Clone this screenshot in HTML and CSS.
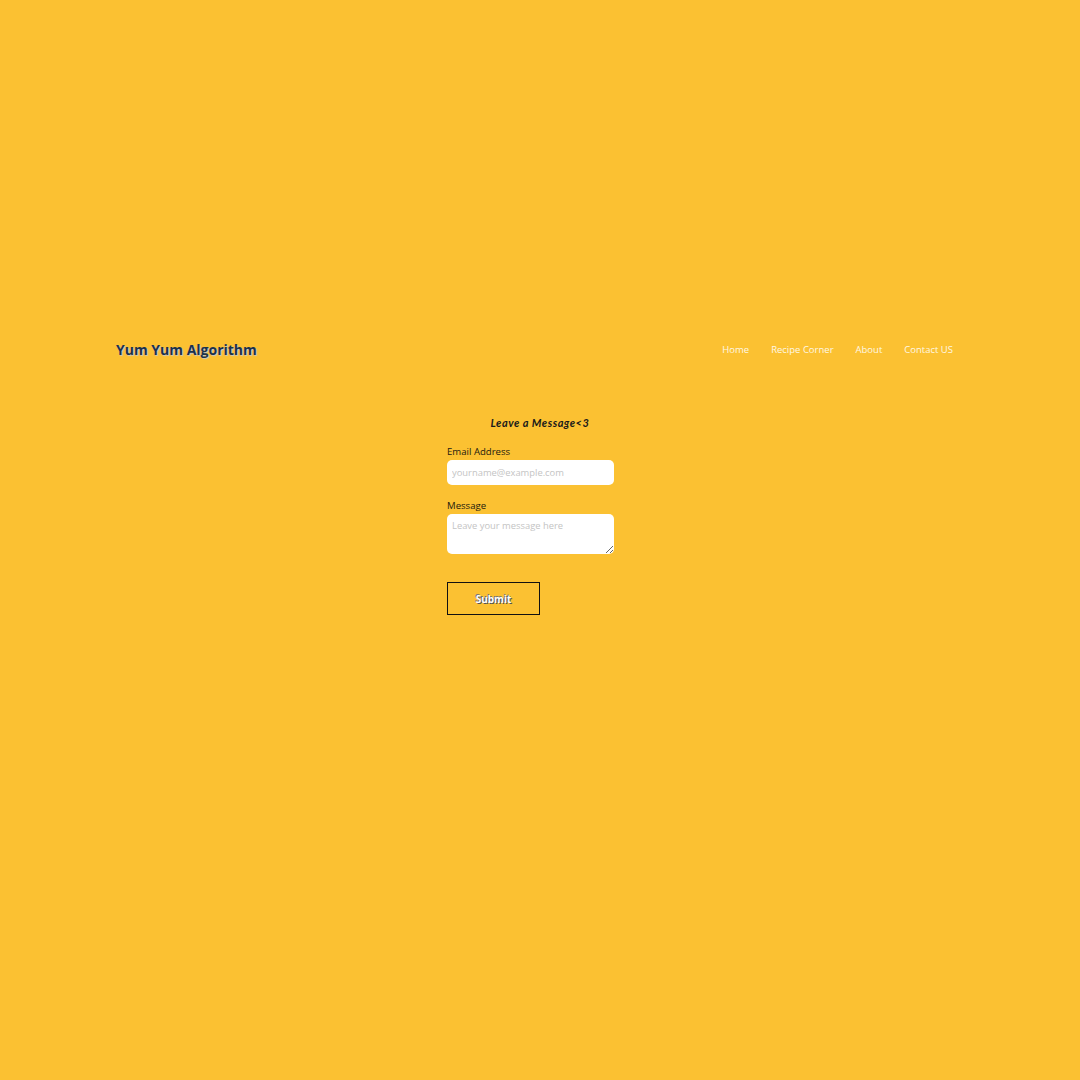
FILE: index.html
```html
<!DOCTYPE html>
<html lang="en">
<head>
<meta charset="utf-8">
<title>Contact - Yum Yum Algorithm</title>
<link rel="stylesheet" href="styles.css">
</head>
<body>
<div class="page">
  <header class="header">
    <div class="logo">Yum Yum Algorithm</div>
    <nav class="nav">
      <a href="#">Home</a>
      <a href="#">Recipe Corner</a>
      <a href="#">About</a>
      <a href="#">Contact US</a>
    </nav>
  </header>
  <main class="main">
    <form class="form">
      <h2 class="title">Leave a Message&lt;3</h2>
      <label class="label" for="email">Email Address</label>
      <input class="input" id="email" type="email" placeholder="yourname@example.com">
      <label class="label label-msg" for="msg">Message</label>
      <textarea class="textarea" id="msg" placeholder="Leave your message here"></textarea>
      <button class="submit" type="button">Submit</button>
    </form>
  </main>
</div>
</body>
</html>
```

FILE: styles.css
```css
html, body {
  margin: 0;
  padding: 0;
  background: #fbc132;
}
body {
  font-family: "Open Sans", "Noto Sans", sans-serif;
  color: #111;
}
.page {
  width: 1080px;
  height: 1080px;
  padding-top: 337px;
  box-sizing: border-box;
}
.header {
  display: flex;
  justify-content: space-between;
  align-items: center;
  padding: 0 127px 0 116px;
  height: 24px;
}
.logo {
  font-family: "Open Sans", sans-serif;
  font-weight: 700;
  font-size: 14px;
  color: #1b324d;
  text-shadow: 1px 1px 1px #c8c8c8;
}
.nav {
  display: flex;
  gap: 22px;
}
.nav a {
  color: #fff8e6;
  text-decoration: none;
  font-size: 9.5px;
}
.main {
  display: flex;
  justify-content: center;
  padding-top: 55px;
}
.form {
  width: 186px;
  display: flex;
  flex-direction: column;
  align-items: flex-start;
}
.title {
  align-self: stretch;
  text-align: center;
  font-family: "Lato", sans-serif;
  font-style: italic;
  font-weight: 700;
  font-size: 11px;
  margin: 0 0 16px 0;
  color: #1a1a1a;
  letter-spacing: 0.5px;
}
.label {
  font-size: 9.6px;
  line-height: 14px;
  margin-bottom: 1px;
  color: #1d1a0f;
}
.label-msg {
  margin-top: 14px;
}
.input, .textarea {
  width: 167px;
  box-sizing: border-box;
  border: none;
  border-radius: 5px;
  background: #fff;
  font-family: "Open Sans", sans-serif;
  font-size: 9.4px;
  padding: 0 5px;
  outline: none;
}
.input {
  height: 25px;
}
.textarea {
  height: 40px;
  padding-top: 5px;
  resize: vertical;
  display: block;
}
.input::placeholder, .textarea::placeholder {
  color: #c4c4c4;
}
.submit {
  margin-top: 28px;
  width: 93px;
  height: 33px;
  background: transparent;
  border: 1.5px solid #111;
  font-family: "Open Sans", sans-serif;
  font-weight: 700;
  font-size: 10px;
  color: #fff;
  text-shadow: 1px 1px 0 #555, -1px -1px 0 #777;
  cursor: pointer;
}
```
